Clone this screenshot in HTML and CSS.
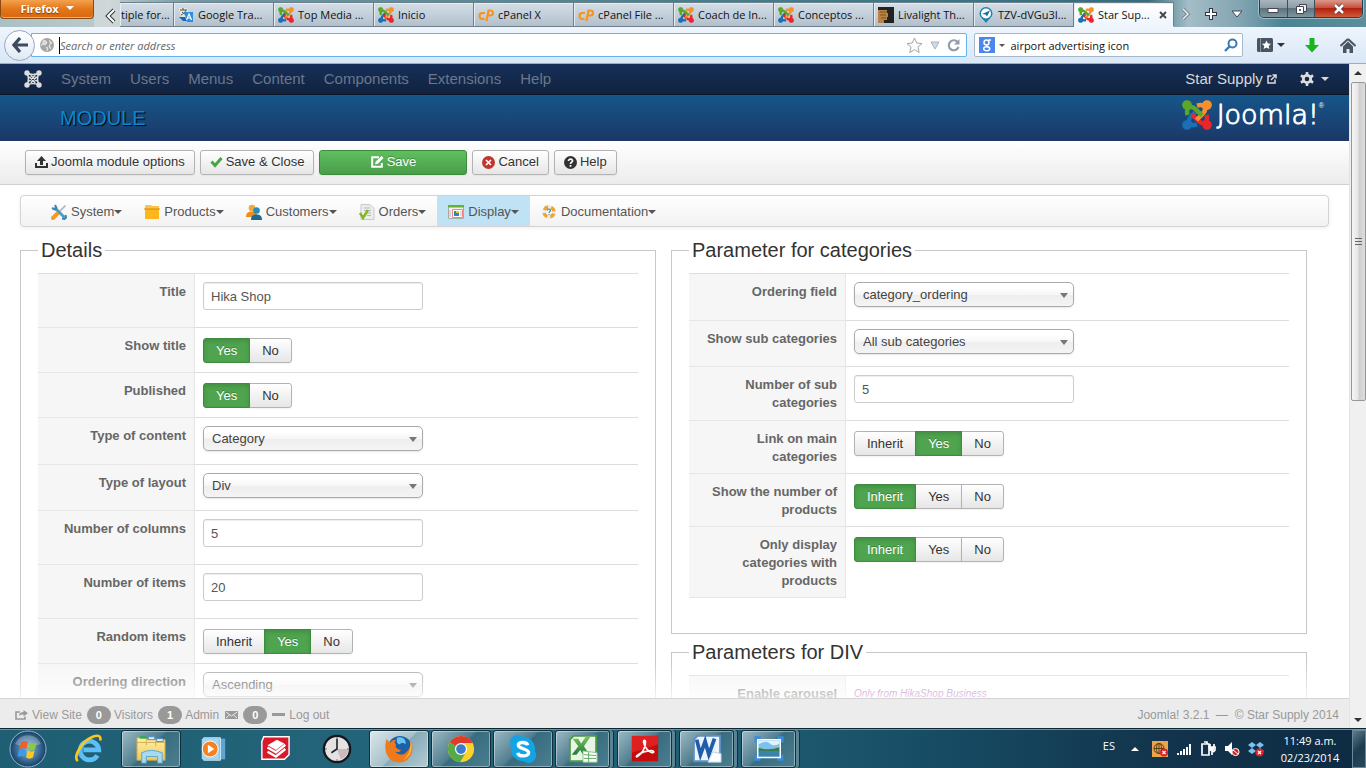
FILE: index.html
```html
<!DOCTYPE html>
<html lang="en">
<head>
<meta charset="utf-8">
<title>Star Supply - Administration</title>
<link rel="stylesheet" href="styles.css">
</head>
<body>
<svg class="defs" aria-hidden="true">
  <defs>
    <g id="arm"><circle cx="4" cy="4" r="3.4"/><path d="M4.500 12C3.500 9 4 6.800 6 5.800C8 5 9.600 6 11 7.400L16 12.400" fill="none" stroke-width="3.600"/></g>
    <symbol id="joomla" viewBox="0 0 24 24">
      <use href="#arm" fill="#1b6fb5" stroke="#1b6fb5" transform="rotate(270 12 12)"/>
      <use href="#arm" fill="#e8262b" stroke="#e8262b" transform="rotate(180 12 12)"/>
      <use href="#arm" fill="#f98f2b" stroke="#f98f2b" transform="rotate(90 12 12)"/>
      <use href="#arm" fill="#5aa72c" stroke="#5aa72c"/>
    </symbol>
    <symbol id="joomla-mono" viewBox="0 0 24 24">
      <g fill="#ddd"><circle cx="4" cy="4" r="3.600"/><circle cx="20" cy="4" r="3.600"/><circle cx="4" cy="20" r="3.600"/><circle cx="20" cy="20" r="3.600"/></g>
      <path d="M4 4Q12 8 20 4Q16 12 20 20Q12 16 4 20Q8 12 4 4zM7 9l8 8M17 9l-8 8M7 15l8-8M17 15L9 7" fill="none" stroke="#ddd" stroke-width="2.200"/>
    </symbol>
    <symbol id="cp" viewBox="0 0 16 16"><path d="M7 6H4.500a2.500 2.500 0 0 0 0 6H6.500M8.500 14L10.500 3.500H12.500a2.500 2.500 0 0 1 0 5H10.500" fill="none" stroke="#f7931e" stroke-width="2.200"/></symbol>
    <linearGradient id="lg-folder" x2="0" y2="1"><stop offset="0" stop-color="#fff0a8"/><stop offset="1" stop-color="#eccb5c"/></linearGradient>
    <linearGradient id="lg-green" x2="0" y2="1"><stop offset="0" stop-color="#7cc162"/><stop offset="1" stop-color="#1f7a34"/></linearGradient>
    <radialGradient id="rg-orb"><stop offset="0" stop-color="#7cc0e8"/><stop offset="1" stop-color="#173e66"/></radialGradient>
  </defs>
</svg>

<header class="tabstrip">
  <button class="firefox">Firefox <i class="tri"></i></button>
  <button class="tabscroll" aria-label="Scroll tabs left"><svg width="12" height="16" viewBox="0 0 12 16"><path d="M9 2L3 8l6 6" fill="none" stroke="#333" stroke-width="4"/><path d="M9 2L3 8l6 6" fill="none" stroke="#fff" stroke-width="2"/></svg></button>
  <nav class="tabs" aria-label="Tabs">
    <a class="tab tab-cut" href="#">tiple for...</a>
    <a class="tab" href="#"><svg viewBox="0 0 16 16"><path d="M1 1h8l3 9H3z" fill="#e9e6da"/><path d="M2 3h7M5 1v2M8 3C7 6 5 7 3 8M4 5l4 3" stroke="#555" fill="none"/><path d="M6 5h9v10H9z" fill="#2a8ee0"/><path d="M1 10l4 4h4l-2-4z" fill="#1767b8"/><path d="M8.500 13L11 7l2.500 6M9.500 11h3" stroke="#fff" fill="none" stroke-width="1.200"/></svg><span>Google Tra...</span></a>
    <a class="tab" href="#"><svg><use href="#joomla"/></svg><span>Top Media ...</span></a>
    <a class="tab" href="#"><svg><use href="#joomla"/></svg><span>Inicio</span></a>
    <a class="tab" href="#"><svg><use href="#cp"/></svg><span>cPanel X</span></a>
    <a class="tab" href="#"><svg><use href="#cp"/></svg><span>cPanel File ...</span></a>
    <a class="tab" href="#"><svg><use href="#joomla"/></svg><span>Coach de In...</span></a>
    <a class="tab" href="#"><svg><use href="#joomla"/></svg><span>Conceptos ...</span></a>
    <a class="tab" href="#"><svg viewBox="0 0 16 16"><path d="M0 0h16v16H0z" fill="#222"/><path d="M0 3h9v3h1v4H9v3H6v3H0z" fill="#b98443"/><path d="M2 5h7M2 8h6M3 11h5" stroke="#7a5122"/></svg><span>Livalight Th...</span></a>
    <a class="tab" href="#"><svg viewBox="0 0 16 16"><path d="M8 0a6.500 6.500 0 0 1 6.500 6.500C14.500 10 11 12 8 16C5 12 1.500 10 1.500 6.500A6.500 6.500 0 0 1 8 0z" fill="#1d83b0"/><circle cx="8" cy="6.500" r="5" fill="#fff"/><path d="M4 7l8-3.500-3 6-1.500-2z" fill="#1d6f9b"/></svg><span>TZV-dVGu3I...</span></a>
    <a class="tab tab-on" href="#" aria-current="page"><svg><use href="#joomla"/></svg><span>Star Sup...</span><svg class="close" viewBox="0 0 8 8"><path d="M1 1l6 6M7 1L1 7" stroke="#444" stroke-width="1.800"/></svg></a>
  </nav>
  <div class="tabtools">
    <svg width="10" height="14" viewBox="0 0 10 14"><path d="M2 2l5 5-5 5" fill="none" stroke="#78868e" stroke-width="3.500"/><path d="M2 2l5 5-5 5" fill="none" stroke="#e4eaed" stroke-width="1.600"/></svg>
    <svg width="12" height="12" viewBox="0 0 12 12"><path d="M6 0v12M0 6h12" stroke="#334" stroke-width="4"/><path d="M6 1v10M1 6h10" stroke="#fff" stroke-width="2"/></svg>
    <svg width="12" height="8" viewBox="0 0 12 8"><path d="M1 1h10L6 7z" fill="#fff" stroke="#445"/></svg>
  </div>
  <div class="winbtns">
    <button aria-label="Minimize"><svg width="12" height="10"><path d="M1 4.500h10v4H1z" fill="#fff" stroke="#445"/></svg></button>
    <button aria-label="Restore"><svg width="13" height="12"><path d="M4.500 1.500h7v7h-7z" fill="#eee" stroke="#445"/><path d="M1.500 3.500h7v7h-7z" fill="#fff" stroke="#445"/><path d="M4 6h2v2H4z" fill="#567"/></svg></button>
    <button class="x" aria-label="Close"><svg width="14" height="12" viewBox="0 0 14 12"><path d="M3 2l8 8M11 2l-8 8" stroke="#533" stroke-width="4"/><path d="M3 2l8 8M11 2l-8 8" stroke="#fff" stroke-width="2.500"/></svg></button>
  </div>
</header>

<div class="navbar">
  <button class="back" aria-label="Back"><svg width="16" height="16" viewBox="0 0 16 16"><path d="M8 1L2 8l6 7M2 8h14" fill="none" stroke="#3c4b5d" stroke-width="3.200"/></svg></button>
  <div class="urlbox">
    <svg width="14" height="14" viewBox="0 0 14 14"><circle cx="7" cy="7" r="7" fill="#a5a5a5"/><path d="M3 2l3 1 1 2-2 2-3-1-1 2M9 2l3 3-2 1-1 3 2 2M6 9l2 1-1 3" fill="#dadada" stroke="#e2e2e2"/></svg>
    <i class="cursor"></i>
    <input type="text" aria-label="Address" placeholder="Search or enter address">
    <svg width="17" height="17" viewBox="0 0 17 17"><path d="M8.500 1l2.300 5 5.200.6-4 3.500 1.200 5.400-4.700-2.800-4.700 2.800L5 10.100 1 6.600 6.200 6z" fill="#fdfdfd" stroke="#a5a5a5"/></svg>
    <svg width="10" height="9" viewBox="0 0 10 9"><path d="M1 1h8L5 8z" fill="#d5dbe2" stroke="#a8b2bd"/></svg>
    <svg width="14" height="14" viewBox="0 0 14 14"><path d="M11 4.500A5 5 0 1 0 11.500 9" fill="none" stroke="#939ca6" stroke-width="2.200"/><path d="M12.500 1v5.500H7z" fill="#939ca6"/></svg>
  </div>
  <div class="searchbox">
    <svg width="16" height="16" viewBox="0 0 16 16"><path d="M0 0h16v16H0z" fill="#4a86ee"/><g fill="none" stroke="#fff" stroke-width="1.500"><circle cx="7.500" cy="5.500" r="2.500"/><path d="M9.500 3H12M8 8c-1 1 0 1.500 1.500 2.200"/><ellipse cx="7.700" cy="11.800" rx="3" ry="2"/></g></svg>
    <i class="tri-s"></i>
    <input type="text" aria-label="Search" value="airport advertising icon">
    <svg width="14" height="14" viewBox="0 0 14 14"><circle cx="8.500" cy="5.500" r="4" fill="none" stroke="#3d78b4" stroke-width="2"/><path d="M5.500 8.500L1 13" stroke="#3d78b4" stroke-width="2.400"/></svg>
  </div>
  <div class="navtools">
    <svg width="16" height="14" viewBox="0 0 16 14"><rect width="16" height="14" rx="1.500" fill="#4a5563"/><path d="M3.500 0v14" stroke="#8793a1"/><path d="M9.500 2.500l1.400 3 3.100.3-2.300 2.100.7 3.200-2.900-1.600-2.900 1.600.7-3.200L5 5.800l3.100-.3z" fill="#fff"/></svg>
    <i class="tri-s dark"></i>
    <svg class="dl" width="14" height="15" viewBox="0 0 14 15"><path d="M4.500 0h5v7H14l-7 7.500L0 7h4.500z" fill="#19b51d"/></svg>
    <svg width="16" height="15" viewBox="0 0 16 15"><path d="M8 1l7.500 7M8 1L.5 8" stroke="#4a5563" stroke-width="2"/><path d="M3 8.500l5-5 5 5V15H9.500v-4h-3v4H3z" fill="#4a5563"/></svg>
  </div>
</div>

<div class="viewport">
  <div class="page">
    <nav class="topnav" aria-label="Main">
      <svg class="brand" width="18" height="18"><use href="#joomla-mono"/></svg>
      <a href="#">System</a><a href="#">Users</a><a href="#">Menus</a><a href="#">Content</a><a href="#">Components</a><a href="#">Extensions</a><a href="#">Help</a>
      <a class="site" href="#">Star Supply <svg width="10" height="10" viewBox="0 0 10 10"><path d="M4.500 2H1v7h7V5.500M4 6l5-5M5.500 1H9v3.500" fill="none" stroke="#ddd" stroke-width="1.500"/></svg></a>
      <button class="gear" aria-label="Settings"><svg width="14" height="14" viewBox="0 0 14 14"><circle cx="7" cy="7" r="3.700" fill="none" stroke="#ddd" stroke-width="2.800"/><path d="M7 0v3M7 11v3M.9 3.500l2.600 1.500M10.500 9l2.600 1.500M.9 10.500L3.500 9M10.500 5l2.600-1.500" stroke="#ddd" stroke-width="2.600"/></svg><i class="caret"></i></button>
    </nav>
    <div class="titlebar">
      <h1>MODULE</h1>
      <div class="logo"><svg width="30" height="30"><use href="#joomla"/></svg><span>Joomla!</span><sup>®</sup></div>
    </div>
    <div class="toolbar">
      <button class="btn"><svg width="13" height="12" viewBox="0 0 13 12"><path d="M1 7v4h11V7" fill="none" stroke="#333" stroke-width="2"/><path d="M6.500 0L11 5H8v4H5V5H2z" fill="#333"/></svg>Joomla module options</button>
      <button class="btn"><svg width="13" height="12" viewBox="0 0 13 12"><path d="M1.500 5.500l3.500 4L11.500 2" fill="none" stroke="#46a546" stroke-width="3"/></svg>Save &amp; Close</button>
      <button class="btn btn-save"><svg width="13" height="12" viewBox="0 0 13 12"><path d="M8 1.200H1.200v9.600h9.600V7" fill="none" stroke="#fff" stroke-width="2"/><path d="M4 8.500l.8-3L10.500 0l2 2-5.500 5.700z" fill="#fff"/></svg>Save</button>
      <button class="btn"><svg width="13" height="13" viewBox="0 0 13 13"><circle cx="6.500" cy="6.500" r="6.500" fill="#bd362f"/><path d="M4 4l5 5M9 4L4 9" stroke="#fff" stroke-width="1.700"/></svg>Cancel</button>
      <button class="btn"><svg width="13" height="13" viewBox="0 0 13 13"><circle cx="6.500" cy="6.500" r="6.500" fill="#333"/><path d="M4.500 5c0-2.600 4.200-2.400 4 0-.1 1.200-2 1.300-2 3M6.500 9v1.700" fill="none" stroke="#fff" stroke-width="1.700"/></svg>Help</button>
    </div>

    <main class="content">
      <nav class="hikamenu" aria-label="HikaShop">
        <a href="#"><svg viewBox="0 0 16 16"><path d="M14.500 1.500L6 10" stroke="#aab3ba" stroke-width="1.600"/><path d="M6.500 9.500L2 14" stroke="#f59a22" stroke-width="4" stroke-linecap="round"/><path d="M3.500 3.500l10 10" stroke="#4a9cc4" stroke-width="2.800"/><path d="M1 4l3 1.500L5.500 4 4 1M11 14.500l2.500.5 1.500-1.500-.5-2.500" stroke="#3a86ad" stroke-width="2" fill="none"/></svg>System<i class="caret"></i></a>
        <a href="#"><svg viewBox="0 0 16 16"><path d="M1 2l1-1h5l1 1h7v4H1z" fill="#f7c548"/><path d="M1 5h14v10H1z" fill="#ffb51c"/><path d="M0 5h16" stroke="#d98b00"/></svg>Products<i class="caret"></i></a>
        <a href="#"><svg viewBox="0 0 16 16"><circle cx="6" cy="4" r="3.300" fill="#f5a83a"/><path d="M0 13c0-4 2-5.500 6-5.500S11 9 11 13z" fill="#f08b1e"/><circle cx="10.500" cy="6.500" r="3.300" fill="#2c8cb5"/><path d="M5 16c0-4 2-5.500 5.500-5.500S16 12 16 16z" fill="#1b6a94"/></svg>Customers<i class="caret"></i></a>
        <a href="#"><svg viewBox="0 0 16 16"><path d="M2 .5h9l4 4v11H2z" fill="#eceeee" stroke="#c5caca"/><path d="M5 4h6M5 6.500h7M7 9h5M8 11.500h4" stroke="#b4b9bb"/><path d="M1 9l3 5 5-8" fill="none" stroke="#8ab51f" stroke-width="2.500"/></svg>Orders<i class="caret"></i></a>
        <a class="on" href="#"><svg viewBox="0 0 16 16"><path d="M.5 2.500h15v12H.5z" fill="#f1f1f1" stroke="#aaa"/><path d="M0 1h16v2.500H0z" fill="#5fb52d"/><path d="M4.500 5.500h10v8h-10z" fill="#fff" stroke="#e88"/><path d="M6 7h5v5H6z" fill="#2b8ab5"/><path d="M8 7h3v2H8z" fill="#f3c34a"/><path d="M12 7h2v5h-2z" fill="#ddd"/><path d="M2 6v7" stroke="#bbb"/></svg>Display<i class="caret"></i></a>
        <a href="#"><svg viewBox="0 0 16 16"><circle cx="8" cy="8" r="5" fill="none" stroke="#eee" stroke-width="4"/><circle cx="8" cy="8" r="5" fill="none" stroke="#f1a32a" stroke-width="3.500" stroke-dasharray="4.600 3.254" stroke-dashoffset="6.200"/><path d="M6.500 6.500c0-2 3-2 3 0 0 1-1.500 1-1.500 2.500M8 10v1" fill="none" stroke="#3a86ad" stroke-width="1.200"/></svg>Documentation<i class="caret"></i></a>
      </nav>

      <div class="columns">
        <fieldset>
          <legend>Details</legend>
          <table>
            <tr><th><label for="f-title">Title</label></th><td><input class="text" id="f-title" type="text" value="Hika Shop"></td></tr>
            <tr><th>Show title</th><td><div class="radios" role="radiogroup" aria-label="Show title"><label><input type="radio" name="st" checked>Yes</label><label><input type="radio" name="st">No</label></div></td></tr>
            <tr><th>Published</th><td><div class="radios" role="radiogroup" aria-label="Published"><label><input type="radio" name="pub" checked>Yes</label><label><input type="radio" name="pub">No</label></div></td></tr>
            <tr class="row-select"><th><label for="f-ct">Type of content</label></th><td><span class="select"><select id="f-ct"><option>Category</option></select></span></td></tr>
            <tr class="row-select-short"><th><label for="f-lay">Type of layout</label></th><td><span class="select"><select id="f-lay"><option>Div</option></select></span></td></tr>
            <tr><th><label for="f-cols">Number of columns</label></th><td><input class="text" id="f-cols" type="text" value="5"></td></tr>
            <tr><th><label for="f-items">Number of items</label></th><td><input class="text" id="f-items" type="text" value="20"></td></tr>
            <tr><th>Random items</th><td><div class="radios" role="radiogroup" aria-label="Random items"><label><input type="radio" name="rnd">Inherit</label><label><input type="radio" name="rnd" checked>Yes</label><label><input type="radio" name="rnd">No</label></div></td></tr>
            <tr class="row-select"><th><label for="f-dir">Ordering direction</label></th><td><span class="select"><select id="f-dir"><option>Ascending</option></select></span></td></tr>
          </table>
        </fieldset>
        <div class="stack">
          <fieldset class="params">
            <legend>Parameter for categories</legend>
            <table>
              <tr class="row-select"><th><label for="f-of">Ordering field</label></th><td><span class="select"><select id="f-of"><option>category_ordering</option></select></span></td></tr>
              <tr class="row-select-short"><th><label for="f-sub">Show sub categories</label></th><td><span class="select"><select id="f-sub"><option>All sub categories</option></select></span></td></tr>
              <tr><th><label for="f-nsub">Number of sub categories</label></th><td><input class="text" id="f-nsub" type="text" value="5"></td></tr>
              <tr><th>Link on main categories</th><td><div class="radios" role="radiogroup" aria-label="Link on main categories"><label><input type="radio" name="lm">Inherit</label><label><input type="radio" name="lm" checked>Yes</label><label><input type="radio" name="lm">No</label></div></td></tr>
              <tr><th>Show the number of products</th><td><div class="radios" role="radiogroup" aria-label="Show the number of products"><label><input type="radio" name="np" checked>Inherit</label><label><input type="radio" name="np">Yes</label><label><input type="radio" name="np">No</label></div></td></tr>
              <tr class="last"><th>Only display categories with products</th><td><div class="radios" role="radiogroup" aria-label="Only display categories with products"><label><input type="radio" name="od" checked>Inherit</label><label><input type="radio" name="od">Yes</label><label><input type="radio" name="od">No</label></div></td></tr>
            </table>
          </fieldset>
          <fieldset>
            <legend>Parameters for DIV</legend>
            <table>
              <tr><th>Enable carousel</th><td><a class="upsell" href="#">Only from HikaShop Business</a></td></tr>
            </table>
          </fieldset>
        </div>
      </div>
    </main>

    <footer class="status">
      <a href="#"><svg width="13" height="10" viewBox="0 0 13 10"><path d="M5 2H1v7h9V6.500" fill="none" stroke="#999" stroke-width="1.600"/><path d="M4 6c0-3 2-4 4.500-4V0L13 3.200 8.500 6.300V4.400C6.500 4.400 5 4.600 4 6z" fill="#999"/></svg>View Site</a>
      <span class="badge">0</span><span>Visitors</span>
      <span class="badge">1</span><span>Admin</span>
      <a class="mail" href="#" aria-label="Messages"><svg width="13" height="8" viewBox="0 0 13 8"><path d="M0 0h13v8H0z" fill="#999"/><path d="M1 1l5.500 4L12 1M1 7l3.500-3M12 7L8.500 4" fill="none" stroke="#ececec"/></svg></a>
      <span class="badge">0</span>
      <a class="logout" href="#"><i class="dash"></i>Log out</a>
      <span class="copy">Joomla! 3.2.1 &nbsp;—&nbsp; © Star Supply 2014</span>
    </footer>
  </div>
  <div class="scrollbar" aria-hidden="true">
    <i class="arrow up"></i>
    <div class="thumb"><i></i><i></i><i></i></div>
    <i class="arrow down"></i>
  </div>
</div>

<footer class="taskbar">
  <button class="start" aria-label="Start"><svg width="38" height="38" viewBox="0 0 38 38"><circle cx="19" cy="19" r="18" fill="url(#rg-orb)" stroke="#8fb7cc"/><path d="M6 14a14 14 0 0 1 26 0q-13 6-26 0z" fill="#fff" opacity=".25"/><path d="M12 12c3-1.500 4.500-1.500 7 0l-1.500 7c-2.500-1.500-4.500-1.500-7 0z" fill="#f0602a"/><path d="M20 12.500c3 1.500 5 1.500 7.500 0L26 19.500c-2.500 1.500-4.500 1.500-7 0z" fill="#8fc740"/><path d="M10 20c3-1.500 4.500-1.500 7 0l-1.500 7c-2.500-1.500-4.500-1.500-7 0z" fill="#3c9bea"/><path d="M18.500 20.500c3 1.500 4.500 1.500 7 0L24 27.500c-2.500 1.500-4.500 1.500-7 0z" fill="#fcc822"/></svg></button>
  <div class="apps">
    <button aria-label="Internet Explorer"><svg viewBox="0 0 32 32"><path d="M25 23a10 10 0 1 1 1.500-6H10" fill="none" stroke="#5bc0f5" stroke-width="5"/><path d="M4 29C-1 24 8 8 20 3c6-2.500 9-1 8 4" fill="none" stroke="#fcc61c" stroke-width="2.800"/></svg></button>
    <button class="run" aria-label="Explorer"><svg viewBox="0 0 32 32"><path d="M1 4h9l2 2h19v22H1z" fill="url(#lg-folder)" stroke="#c9a548"/><path d="M4 2h7v3H4z" fill="#3aa65a"/><path d="M13 3h7v3h-7zM22 5h7v3h-7z" fill="#e9f0f5" stroke="#4c8fc4"/><path d="M1 9h30M11 6v6M21 7v6" stroke="#d1ac4c"/><path d="M6 31V20q10-5 22 0v11h-5v-7H11v7z" fill="#a8d8f2" stroke="#5aa5d0"/></svg></button>
    <button aria-label="Media Player"><svg viewBox="0 0 32 32"><path d="M8 5h21v22H8z" fill="#5ea6d0"/><path d="M6 4h18v24H6z" fill="#8cc7e8" stroke="#c8e5f4"/><path d="M4 5h18v22H4z" fill="#a9d5ee"/><circle cx="13" cy="16" r="8.500" fill="#f5821e" stroke="#fff"/><path d="M10.500 11.500v9l7-4.500z" fill="#fff"/></svg></button>
    <button aria-label="Library"><svg viewBox="0 0 32 32"><path d="M4 3l27 0v19l-5 5H2V8z" fill="#d9182b" stroke="#fff" stroke-width="1.500"/><path d="M8 12l10-6 8 4-9 7z" fill="#fff"/><path d="M8 14.500l9 5 10-8M8 19l9 5 10-8" fill="none" stroke="#fff" stroke-width="2.500"/></svg></button>
    <button aria-label="Clock"><svg viewBox="0 0 32 32"><circle cx="16" cy="16" r="14" fill="#e4e2e2" stroke="#17141c" stroke-width="2.500"/><path d="M16 16H28A12 12 0 0 1 20 27z" fill="#cdbabb"/><path d="M16 5v11l-6 4" fill="none" stroke="#222" stroke-width="1.700"/><path d="M16 3v2M16 27v2M3 16h2M27 16h2" stroke="#555"/></svg></button>
    <button class="run on" aria-label="Firefox"><svg viewBox="0 0 32 32"><circle cx="17" cy="15" r="13" fill="#1e5fa8"/><path d="M14 4c6-2 10 2 9 7-2-2-5-2-6 0-3 0-4-3-3-7z" fill="#66c5ef"/><path d="M3 5c-3 8-2 18 5 23 8 5 20 2 22-10 1-5 0-8-2-11 1 5-1 9-3 11-3 5-10 5-13 1 3 1 5 0 6-2-4 0-7-4-5-6-2-1-2-3 0-5-3 0-5 1-6 3C5 8 4 7 3 5z" fill="#ee7a1c"/><path d="M28 7c4 8 0 18-8 21 7-5 9-12 8-21z" fill="#fcc23a"/></svg></button>
    <button class="run" aria-label="Chrome"><svg viewBox="0 0 32 32"><circle cx="16" cy="16" r="14" fill="#fcd12a"/><path d="M16 16L4 9A14 14 0 0 1 28.500 9.500H16z" fill="#dd3b2c"/><path d="M4 9A14 14 0 0 0 15 30l6-10-5-4z" fill="#56ab48"/><circle cx="16" cy="16" r="6.500" fill="#fff"/><circle cx="16" cy="16" r="5.200" fill="#3c7cc9"/></svg></button>
    <button class="run" aria-label="Skype"><svg viewBox="0 0 32 32"><circle cx="10" cy="9" r="8" fill="#14a3e4"/><circle cx="22" cy="23" r="8" fill="#14a3e4"/><circle cx="16" cy="16" r="13" fill="#14a3e4"/><path d="M21 12c-1-4-10-4-10 0s11 3.500 11 8-11 4.500-11.500 0" fill="none" stroke="#fff" stroke-width="3.600"/></svg></button>
    <button class="run many" aria-label="Excel"><svg viewBox="0 0 32 32"><path d="M6 2h24v27H2V6z" fill="#e9f4e4" stroke="#4b9b45" stroke-width="2"/><path d="M5 5h6l3 5 5-7h5l-7 10 6 9h-7l-3-5-4 5H4l7-9z" fill="url(#lg-green)"/><path d="M16 18l15 2v10H16z" fill="#fff" stroke="#8cc18a"/><path d="M17 22l13 1M17 26h13M22 19v11" stroke="#56a957"/></svg></button>
    <button class="run many" aria-label="Adobe Reader"><svg viewBox="0 0 32 32"><path d="M2 2h28v27H2z" fill="#c40c0c"/><path d="M2 2h28v9q-14 5-28 9z" fill="#dd2020"/><path d="M8 24c5-3 9-10 8.500-16-.1-2-2.500-1.500-2 1 1 5 5 10 9 11 3 0 2-2.500-1-2.300-5 .3-9 1.300-13 3.800-3 2-3.500 3.500-1.500 2.500z" fill="none" stroke="#fff" stroke-width="1.800"/></svg></button>
    <button class="run many" aria-label="Word"><svg viewBox="0 0 32 32"><path d="M6 2h24v27H2V6z" fill="#edf3fa" stroke="#5b8fc4" stroke-width="2"/><path d="M5 6l4 16 5-14 4 14 6-17" fill="none" stroke="#1f5cab" stroke-width="4"/><path d="M22 19l9 2v9H17z" fill="#fff" stroke="#b9cbe0"/></svg></button>
    <button class="run many" aria-label="Pictures"><svg viewBox="0 0 32 32"><path d="M2 9V4h5M25 4h5v5M30 22v5h-5M7 27H2v-5" fill="none" stroke="#3c8cdb" stroke-width="3"/><path d="M4 6h24v19H4z" fill="#7fc0ec" stroke="#fff" stroke-width="1.500"/><path d="M5 11q8-5 12-1t10 0v-3H5z" fill="#e4f2fb"/><path d="M5 15q12 3 22-1v5H5z" fill="#3d7a43"/><path d="M5 18h22v6H5z" fill="#3b83a8"/></svg></button>
  </div>
  <div class="tray">
    <span class="lang">ES</span>
    <i class="tri-up"></i>
    <svg viewBox="0 0 16 16"><path d="M0 0h16v16H0z" fill="#e9a54c"/><g fill="none" stroke="#5c3c17"><circle cx="7" cy="7.500" r="5"/><path d="M2 7.500h10M7 2.500v10"/><ellipse cx="7" cy="7.500" rx="2.500" ry="5"/></g><circle cx="12" cy="11.500" r="4" fill="#d8242b"/><path d="M10.500 10l3 3M13.500 10l-3 3" stroke="#fff" stroke-width="1.300"/></svg>
    <svg viewBox="0 0 16 16"><path d="M2 14v-2M5 14v-4M8 14V8M11 14V6M14 14V3" stroke="#fff" stroke-width="2"/></svg>
    <svg viewBox="0 0 16 16"><path d="M2 3h7v11H2zM4 1h3v2M10 6V3M14 6V3M8 6h7v3q-1 2-3 2v3" fill="none" stroke="#fff" stroke-width="1.700"/><path d="M9 6h5v3l-2 2-3-2z" fill="#fff"/></svg>
    <svg viewBox="0 0 16 16"><path d="M1 5h3l4-4v13l-4-4H1z" fill="#fff"/><circle cx="11.500" cy="11" r="3.600" fill="#d8242b" stroke="#fff"/><path d="M9 9l5 4" stroke="#fff"/></svg>
    <svg viewBox="0 0 16 16"><path d="M4 1l4 3-4 3-4-3zM12 1l4 3-4 3-4-3zM4 7l4 3-4 3-4-3zM12 7l4 3-4 3-4-3z" fill="#7cc1f0"/><circle cx="11.500" cy="11.500" r="4" fill="#d8242b"/><path d="M10 10l3 3M13 10l-3 3" stroke="#fff" stroke-width="1.300"/></svg>
  </div>
  <div class="clock"><span>11:49 a.m.</span><span>02/23/2014</span></div>
  <button class="desk" aria-label="Show desktop"></button>
</footer>
</body>
</html>
```
FILE: styles.css
```css
* { box-sizing: border-box; }
body {
  margin: 0;
  height: 100vh;
  display: flex;
  flex-direction: column;
  overflow: hidden;
  font: 13px/18px "Liberation Sans", Arial, sans-serif;
  color: #333;
  background: #fff;
}
a { color: inherit; text-decoration: none; }
button { font: inherit; color: inherit; margin: 0; padding: 0; border: 0; background: none; }
svg { flex: none; }
.defs { position: absolute; width: 0; height: 0; }

/* Browser chrome */
.tabstrip, .navbar, .taskbar { font-family: "Open Sans", "Noto Sans", sans-serif; font-size: 11px; flex: none; color: #111; }
.tabstrip {
  display: flex;
  height: 27px;
  background: linear-gradient(90deg, #a9c1c6, #bccacc 8%, #6f9aa5 14%, #47808d 50%, #2f6f80 84%, #a5bdc6 87%, #7fa3b0 91%, #4a8394 94%, #5d8f9d);
}
.firefox {
  width: 94px;
  height: 19px;
  border: 1px solid #8a4a12;
  border-top: 0;
  border-radius: 0 0 4px 4px;
  background: linear-gradient(#f4a24d, #e2761b 50%, #d9660d);
  box-shadow: inset 0 -1px 0 #f3b577;
  color: #fff;
  font-weight: 700;
  text-shadow: 0 1px 1px #7a3c06;
}
.tri { display: inline-block; margin: 0 0 3px 4px; border: 4px solid transparent; border-top-color: #fff; border-bottom: 0; }
.tabscroll { width: 26px; height: 27px; padding: 5px 0 0 8px; line-height: 0; background: rgba(225, 228, 228, .5); }
.tabs { display: flex; flex: 1; min-width: 0; padding-top: 2px; }
.tab {
  flex: 1 1 100px;
  min-width: 0;
  display: flex;
  align-items: center;
  gap: 4px;
  padding: 0 0 0 4px;
  height: 25px;
  border: 1px solid #6f7f8a;
  border-width: 1px 1px 1px 0;
  background: linear-gradient(#d3dde5, #c0cdd8 60%, #b3c0cc);
  box-shadow: inset 1px 1px 0 #e6edf3;
  white-space: nowrap;
}
.tab svg { width: 16px; height: 16px; }
.tab-cut { flex: 0 0 54px; padding-left: 1px; }
.tab-on { background: linear-gradient(#fff, #eef5fd); border-bottom-color: #eef5fd; }
.tab-on span { flex: 1; }
.tab .close { width: 8px; height: 8px; margin-right: 6px; }
.tabtools { display: flex; align-items: center; gap: 14px; width: 85px; padding-left: 7px; }
.winbtns { display: flex; width: 104px; height: 18px; margin-right: 3px; border: 1px solid #26414c; border-top: 0; border-radius: 0 0 5px 5px; overflow: hidden; box-shadow: 0 0 0 1px rgba(255,255,255,.4); }
.winbtns button { flex: 27; display: flex; align-items: center; justify-content: center; border-right: 1px solid #3b4f58; background: linear-gradient(#a9b6be, #8d9ca6 45%, #5e737f 50%, #7f95a0); }
.winbtns .x { flex: 47; border: 0; background: linear-gradient(#d99a8c, #c9503e 45%, #b3210f 50%, #cd5b3a); }

.navbar {
  display: flex;
  align-items: center;
  height: 37px;
  padding-left: 4px;
  border-bottom: 1px solid #98aec4;
  background: linear-gradient(#eef5fd, #d9e7f7);
}
.back { z-index: 1; width: 31px; height: 31px; border: 1px solid #95a9bd; border-radius: 50%; background: linear-gradient(#fff, #dfe9f4); display: flex; align-items: center; justify-content: center; }
.urlbox, .searchbox { display: flex; align-items: center; height: 24px; background: #fff; border: 1px solid #62b3ee; }
.urlbox { flex: 940; margin-left: -4px; padding: 0 5px 0 8px; border-radius: 0 2px 2px 0; }
.urlbox svg + svg { margin-left: 7px; }
.cursor { width: 1px; height: 17px; margin-left: 5px; background: #000; }
.urlbox input, .searchbox input { flex: 1; min-width: 0; height: 20px; padding: 0; border: 0; outline: 0; background: none; font: inherit; color: #111; }
.urlbox input::placeholder { font-style: italic; color: #666; opacity: 1; }
.searchbox { flex: 265; margin-left: 7px; padding: 0 4px; border-color: #a5b9cd; border-radius: 2px; }
.tri-s { margin: 0 6px 0 4px; border: 3px solid transparent; border-top-color: #555; border-bottom: 0; }
.navtools { display: flex; align-items: center; width: 123px; padding-left: 14px; }
.tri-s.dark { border-width: 4px 4px 0; border-top-color: #333; margin: 0 20px 0 4px; }
.dl { margin-right: 21px; }

/* Page */
.viewport { flex: 1; min-height: 0; display: flex; }
.page { flex: 1; min-width: 0; display: flex; flex-direction: column; }
.topnav {
  flex: none;
  display: flex;
  align-items: center;
  gap: 19px;
  height: 31px;
  padding: 0 20px 0 24px;
  border-bottom: 1px solid #0b1626;
  background: linear-gradient(#17305a, #10223e);
  font-size: 15px;
  color: #6b778c;
}
.topnav .site { margin-left: auto; color: #d9d9d9; }
.gear { display: flex; align-items: center; gap: 7px; padding-left: 4px; color: #d9d9d9; }
.caret { display: inline-block; border: 4px solid transparent; border-top-color: currentColor; border-bottom: 0; vertical-align: middle; }
.titlebar { flex: none; display: flex; align-items: center; justify-content: space-between; height: 46px; padding: 0 25px 0 60px; background: linear-gradient(#16568a, #1b3867); }
h1 { margin: 0; font-size: 20px; line-height: 24px; font-weight: 400; color: #0d86cf; text-shadow: 1px 1px 1px #000; }
.logo { display: flex; align-items: center; color: #fff; margin-top: -6px; }
.logo span { margin-left: 5px; font: 200 27px/30px "DejaVu Sans", sans-serif; -webkit-text-stroke: 1px #fff; }
.logo sup { align-self: flex-start; font-size: 7px; line-height: 12px; }

.toolbar { flex: none; display: flex; gap: 5px; height: 44px; padding: 9px 25px; border-bottom: 1px solid #d0d0d0; background: linear-gradient(#fff, #ececec); }
.btn { display: flex; align-items: center; justify-content: center; gap: 3px; height: 25px; padding: 0 9px 1px; border: 1px solid #b3b3b3; border-radius: 3px; background: linear-gradient(#fff, #e6e6e6); text-shadow: 0 1px 1px rgba(255,255,255,.75); box-shadow: 0 1px 2px rgba(0,0,0,.06); white-space: nowrap; }
.btn-save { width: 148px; color: #fff; border-color: #3d8b3d; background: linear-gradient(#5fbf5f, #4a9d4a); text-shadow: 0 -1px 0 rgba(0,0,0,.25); }

.content { position: relative; flex: 1; min-height: 0; overflow: hidden; padding: 10px 20px 0; }
.content::after { content: ""; position: absolute; left: 0; right: 0; bottom: 0; height: 36px; background: linear-gradient(rgba(255,255,255,0), rgba(255,255,255,.75)); pointer-events: none; }
.hikamenu { display: flex; height: 32px; padding-left: 19px; border: 1px solid #d4d4d4; border-radius: 4px; background: linear-gradient(#fff, #f2f2f2); box-shadow: 0 1px 4px rgba(0,0,0,.07); color: #555; }
.hikamenu a { display: flex; align-items: center; padding: 1px 11px 0; }
.hikamenu svg { width: 16px; height: 16px; margin-right: 4px; }
.hikamenu .on { background: #bfe2f5; }

.columns { display: grid; grid-template-columns: 1fr 1fr; gap: 15px; padding: 13px 22px 0 0; }
fieldset { min-width: 0; margin: 0; padding: 13px 17px 30px; border: 1px solid #c8c8c8; }
legend { padding: 0 3px; font-size: 20px; line-height: 20px; color: #333; }
.stack { display: flex; flex-direction: column; gap: 8px; }
.params { padding-bottom: 35px; }
table { width: 100%; border-collapse: separate; border-spacing: 0; }
th, td { padding: 8px; border-top: 1px solid #ddd; vertical-align: top; text-align: left; }
th { width: 157px; padding: 9px 8px 7px; border-top-color: #e6e6e6; border-right: 1px solid #e6e6e6; background: #f6f6f6; text-align: right; font-weight: 700; color: #666; }
tr:first-child th { border-top-color: #ddd; }
.last th { border-bottom: 1px solid #e6e6e6; }
.row-select { height: 47px; }
.row-select-short { height: 46px; }
.text { display: block; width: 220px; height: 28px; margin-bottom: 9px; padding: 0 7px; border: 1px solid #ccc; border-radius: 3px; box-shadow: inset 0 1px 1px rgba(0,0,0,.075); font: inherit; color: #555; background: #fff; }
.select { position: relative; display: block; width: 220px; }
.select select { appearance: none; display: block; width: 100%; height: 25px; padding: 0 8px; border: 1px solid #aaa; border-radius: 5px; background: linear-gradient(#fff 20%, #f6f6f6 50%, #eee 52%, #f4f4f4); box-shadow: 0 1px 2px rgba(0,0,0,.1); font: inherit; color: #444; }
.select::after { content: ""; position: absolute; right: 6px; top: 11px; border: 4px solid transparent; border-top: 5px solid #777; border-bottom: 0; pointer-events: none; }
.radios { display: flex; margin: 2px 0 1px; }
.radios label { position: relative; height: 25px; padding: 0 12px; border: 1px solid #b3b3b3; background: linear-gradient(#fff, #e6e6e6); line-height: 24px; box-shadow: 0 1px 2px rgba(0,0,0,.05); }
.radios label + label { margin-left: -1px; }
.radios label:first-child { border-radius: 3px 0 0 3px; }
.radios label:last-child { border-radius: 0 3px 3px 0; }
.radios label:has(:checked) { z-index: 1; color: #fff; border-color: #3d8b3d; background: #4fa44f; box-shadow: inset 0 2px 4px rgba(0,0,0,.15); text-shadow: 0 -1px 0 rgba(0,0,0,.25); }
.radios input { position: absolute; inset: 0; margin: 0; opacity: 0; }
.upsell { font-size: 10px; font-style: italic; color: #a040a8; text-decoration: underline; }

.status { flex: none; display: flex; align-items: center; height: 30px; padding: 2px 10px 0 15px; border-top: 1px solid #d4d4d4; background: #ececec; color: #999; font-size: 12px; }
.status a { display: flex; align-items: center; gap: 4px; }
.badge { margin: 0 3px 0 5px; padding: 0 9px; border-radius: 9px; background: #999; color: #fff; font-size: 11px; font-weight: 700; line-height: 18px; }
.mail { margin-left: 6px; }
.dash { width: 13px; height: 3px; background: #999; }
.logout { margin-left: 2px; }
.copy { margin-left: auto; }

.scrollbar { flex: none; display: flex; flex-direction: column; align-items: center; width: 17px; background: #f0f0f0; border-left: 1px solid #e3e3e3; padding: 7px 0 6px; }
.arrow { border: 4px solid transparent; }
.up { border-bottom-color: #333; border-top: 0; }
.down { border-top-color: #333; border-bottom: 0; margin-top: auto; }
.thumb { display: flex; flex-direction: column; align-items: center; justify-content: center; gap: 2px; width: 15px; height: 49%; margin-top: 7px; border: 1px solid #979797; border-radius: 2px; background: linear-gradient(90deg, #f5f5f5, #e6e6e7 45%, #cfcfd1 55%, #dcdcdd); }
.thumb i { width: 7px; height: 1px; background: #666; }

/* Taskbar */
.taskbar { display: flex; align-items: center; height: 40px; border-top: 1px solid #0b2732; box-shadow: inset 0 1px 0 #6c95a3; background: linear-gradient(90deg, #1f5e73, #23657b 30%, #1f5c73 55%, #164a62 70%, #12344c 85%, #0d2b42); color: #fff; }
.start { width: 55px; height: 38px; line-height: 0; }
.apps { display: flex; gap: 2px; padding-left: 4px; }
.apps button { display: flex; align-items: center; justify-content: center; width: 60px; height: 38px; }
.apps svg { width: 30px; height: 30px; }
.apps .run { border: 1px solid #12303c; border-radius: 3px; background: linear-gradient(135deg, #9dbac5, #527f90 45%, #386c7f 50%, #4b7e90); box-shadow: inset 0 0 0 1px rgba(255,255,255,.4); }
.apps .on { background: linear-gradient(135deg, #dce7eb, #a6c0ca 50%, #86aab7 52%, #b3ccd4); }
.apps .many { width: 55px; margin-right: 5px; box-shadow: inset 0 0 0 1px rgba(255,255,255,.4), 3px 0 0 #5b8493, 4px 0 0 #12303c; }
.tray { display: flex; align-items: center; gap: 8px; margin-left: auto; }
.tray svg { width: 16px; height: 16px; }
.lang { margin-right: 8px; padding-bottom: 6px; }
.tri-up { margin-right: 5px; border: 4px solid transparent; border-bottom-color: #fff; border-top: 0; }
.clock { display: flex; flex-direction: column; align-items: center; width: 88px; padding-left: 4px; line-height: 17px; }
.desk { width: 14px; height: 38px; border: 1px solid #6c8796; background: linear-gradient(135deg, #5f7b8b, #1d3c50 50%, #2a485b); }
```
